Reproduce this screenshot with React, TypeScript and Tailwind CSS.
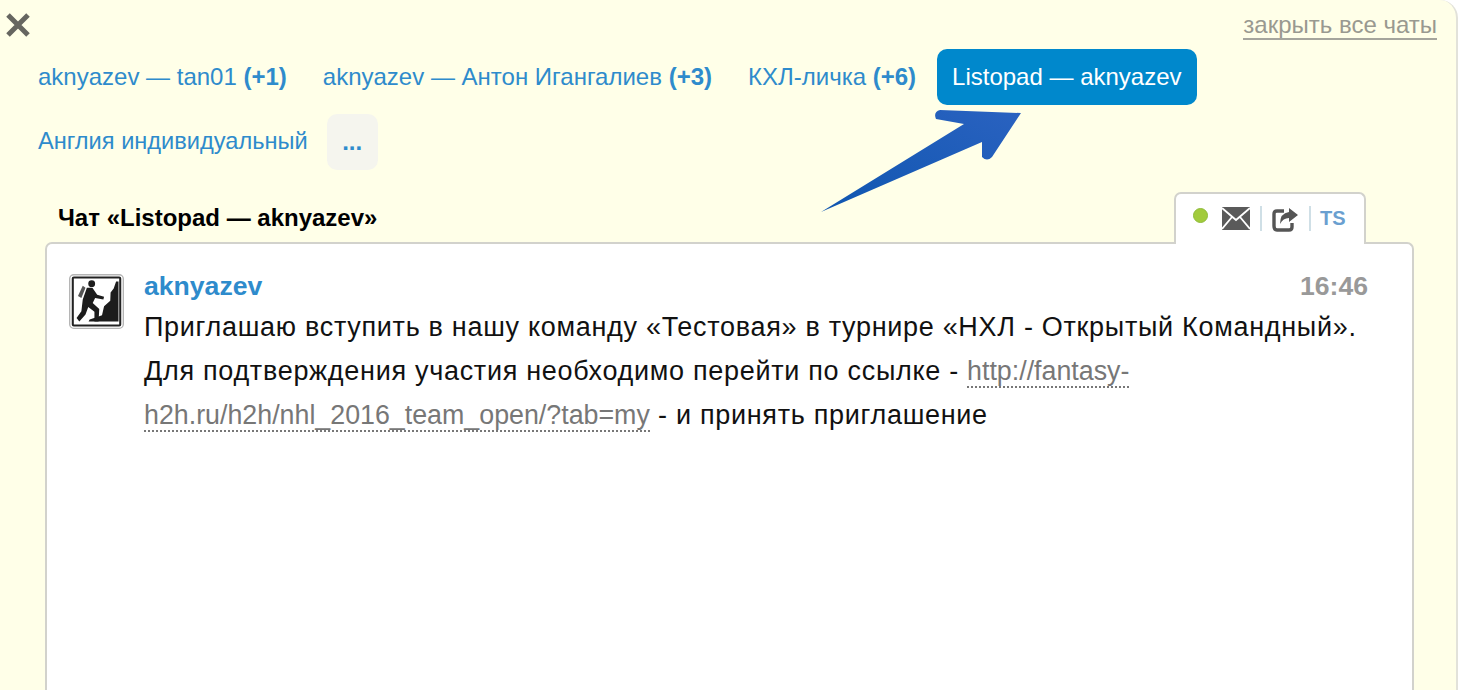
import React from 'react';

const tabs = [
  { name: 'aknyazev — tan01', count: '(+1)' },
  { name: 'aknyazev — Антон Игангалиев', count: '(+3)' },
  { name: 'КХЛ-личка', count: '(+6)' },
];

const Avatar: React.FC = () => (
  <svg viewBox="28 28 160 160" className="w-[55px] h-[55px] block shrink-0">
    <rect x="30" y="30" width="156" height="156" rx="12" fill="#fff" stroke="#b5b5b5" strokeWidth="4" />
    <rect x="39" y="38" width="138" height="140" rx="3" fill="#fff" stroke="#222" strokeWidth="6" />
    <path d="M165 50 L172 50 L172 166 L85 166 L88 160 L112 152 L124 148 L130 122 L148 106 L149 82 L158 70 Z" fill="#1c1c1c" />
    <circle cx="94" cy="56" r="10" fill="#1c1c1c" />
    <path d="M80 68 L96 68 L110 88 L130 94 L128 102 L104 98 L97 112 L116 130 L114 166 L102 166 L102 138 L84 124 L76 146 L58 166 L50 156 L64 136 L68 102 Z" fill="#1c1c1c" />
    <path d="M68 62 L76 68 L64 98 L54 92 Z" fill="#555" />
  </svg>
);

const MailIcon: React.FC = () => (
  <svg width="28" height="23" viewBox="0 0 28 23" className="block">
    <rect x="0" y="0" width="28" height="23" fill="#5a5a5a" />
    <path d="M0 1 L14 13 L28 1 M0 22 L10 10 M28 22 L18 10" stroke="#fff" strokeWidth="1.8" fill="none" />
  </svg>
);

const ShareIcon: React.FC = () => (
  <svg width="27" height="26" viewBox="0 0 27 26" className="block">
    <path d="M12 5 H5 Q2 5 2 8 V20 Q2 24 5 24 H17 Q20 24 20 21 V17" stroke="#555" strokeWidth="3.4" fill="none" />
    <path d="M17 2 L26 9 L17 16 V12 Q11 12 8 18 Q8 7 17 6 Z" fill="#555" />
  </svg>
);

const App: React.FC = () => {
  return (
    <div className="w-[1460px] h-[690px] bg-white overflow-hidden relative font-['Liberation_Sans',Arial,sans-serif]">
      <div className="w-[1458px] h-[690px] bg-[#ffffe8] border-r-[2px] border-[#e2e2da] rounded-tr-[18px] overflow-hidden">
        <div className="h-[49px] flex justify-between items-start pl-[5px] pr-[19px]">
          <svg width="26" height="24" viewBox="0 0 26 24" className="mt-[13px]">
            <path d="M3 2 L23 22 M23 2 L3 22" stroke="#666660" strokeWidth="5" />
          </svg>
          <a className="mt-[11px] text-[24px] leading-[27px] text-[#999990] border-b-[2px] border-[#a5a59c]">закрыть все чаты</a>
        </div>

        <div className="flex flex-wrap items-center pl-[20px] w-[1300px] gap-y-[9px]">
          {tabs.map((t) => (
            <a key={t.name} className="h-[56px] px-[18px] flex items-center text-[24px] text-[#2e8bcc] whitespace-nowrap">
              {t.name}&nbsp;<b>{t.count}</b>
            </a>
          ))}
          <a className="h-[56px] px-[15px] ml-[3px] flex items-center rounded-[10px] bg-[#0088cc] text-[24px] text-white whitespace-nowrap">
            Listopad — aknyazev
          </a>
          <a className="h-[56px] px-[18px] flex items-center text-[23.6px] text-[#2e8bcc] whitespace-nowrap">Англия индивидуальный</a>
          <a className="w-[51px] h-[56px] ml-[1px] flex items-center justify-center rounded-[10px] bg-[#f5f5ee] text-[24px] font-bold text-[#2e8bcc]">...</a>
        </div>

        <div className="mt-[22px] ml-[45px] w-[1369px] flex justify-between items-end pl-[13px] pr-[48px] relative z-10">
          <h2 className="text-[24px] leading-[27px] mb-[11px] font-bold text-black">Чат «Listopad — aknyazev»</h2>
          <div className="w-[192px] h-[52px] -mb-[2px] bg-white border-[2px] border-b-0 border-[#d2d2cc] rounded-t-[7px] flex items-center pl-[17px] pb-[2px]">
            <span className="w-[15px] h-[15px] rounded-full bg-[#a2cb3c] border border-[#8fbc3a] -mt-[6px]" />
            <span className="ml-[14px]"><MailIcon /></span>
            <span className="w-[2px] h-[25px] bg-[#cfdfe6] ml-[10px]" />
            <span className="ml-[10px] mt-[2px]"><ShareIcon /></span>
            <span className="w-[2px] h-[25px] bg-[#cfdfe6] ml-[10px]" />
            <span className="ml-[9px] text-[20px] font-bold text-[#6a9fd0] -mt-[1px]">TS</span>
          </div>
        </div>

        <div className="ml-[45px] w-[1369px] h-[460px] bg-white border-[2px] border-b-0 border-[#d2d2cc] rounded-t-[7px] pt-[30px] pl-[22px] pr-[44px] flex gap-[20px]">
          <Avatar />
          <div className="flex-1">
            <div className="flex justify-between items-center h-[26px]">
              <span className="text-[26.6px] font-bold text-[#2e8bcc]">aknyazev</span>
              <span className="text-[26.6px] font-bold text-[#999999]">16:46</span>
            </div>
            <p className="mt-[5px] text-[27px] leading-[44px] tracking-[0.7px] text-[#111]">
              Приглашаю вступить в нашу команду «Тестовая» в турнире «НХЛ - Открытый Командный». Для подтверждения участия необходимо перейти по ссылке -{' '}
              <a className="text-[26.8px] tracking-normal text-[#777] border-b-[2px] border-dotted border-[#777]">http://fantasy-h2h.ru/h2h/nhl_2016_team_open/?tab=my</a>{' '}
              - и принять приглашение
            </p>
          </div>
        </div>
      </div>

      <svg className="absolute left-[815px] top-[105px]" width="215" height="115" viewBox="815 105 215 115">
        <defs>
          <linearGradient id="arrowFill" x1="0" y1="1" x2="1" y2="0">
            <stop offset="0" stopColor="#0f56b0" />
            <stop offset="1" stopColor="#2a62c0" />
          </linearGradient>
        </defs>
        <path d="M821 212 L964 124 L936 119 Q933 112 940 110 L1021 113 L992 157 Q987 162 982 157 L982 142 Z" fill="url(#arrowFill)" />
      </svg>
    </div>
  );
};

export default App;
